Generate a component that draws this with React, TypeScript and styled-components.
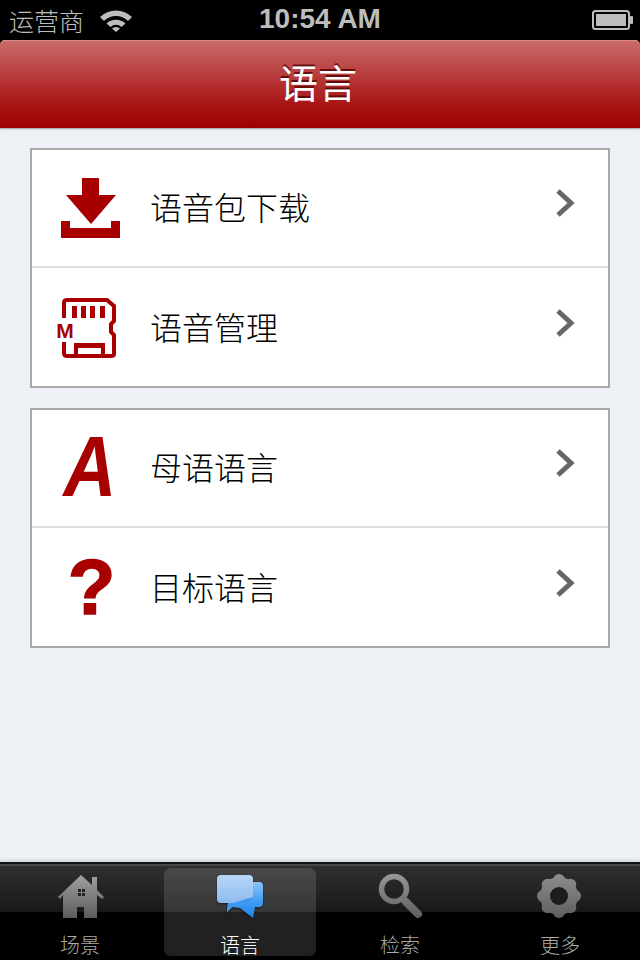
import React from "react";
import styled, { createGlobalStyle } from "styled-components";

const GlobalStyle = createGlobalStyle`
  html, body {
    margin: 0;
    padding: 0;
    background: #000;
  }
  #root {
    width: 640px;
    height: 960px;
    overflow: hidden;
  }
`;

const CJK = `"Noto Sans CJK SC", "Liberation Sans", sans-serif`;

const Screen = styled.div`
  width: 640px;
  height: 960px;
  display: flex;
  flex-direction: column;
  background: #000;
  font-family: ${CJK};
`;

const StatusBar = styled.div`
  height: 40px;
  flex: none;
  display: grid;
  grid-template-columns: 1fr auto 1fr;
  align-items: center;
  padding: 0 7px 0 9px;
  color: #bdbdbd;
`;

const StatusLeft = styled.div`
  display: flex;
  align-items: center;
  gap: 15px;
`;

const Carrier = styled.span`
  font-size: 25px;
  line-height: 40px;
  font-weight: 300;
`;

const Clock = styled.span`
  font-family: "Liberation Sans", Arial, sans-serif;
  font-size: 28px;
  font-weight: 700;
  line-height: 38px;
  margin: 0 2px 2px 0;
`;

const StatusRight = styled.div`
  display: flex;
  justify-content: flex-end;
`;

const NavBar = styled.header`
  height: 88px;
  flex: none;
  display: flex;
  align-items: center;
  justify-content: center;
  border-radius: 5px 5px 0 0;
  background: linear-gradient(#cb6a6a 0, #c66060 10%, #a91616 72%, #9f0000 100%);
  box-shadow: inset 0 1px 0 #d98a8a, 0 1px 2px rgba(0, 0, 0, 0.35);
  position: relative;
  z-index: 1;
`;

const NavTitle = styled.h1`
  margin: 0 4px 6px 0;
  color: #fff;
  font-size: 39px;
  font-weight: 400;
  line-height: 82px;
  text-shadow: 0 -2px 0 rgba(80, 0, 0, 0.8);
`;

const Content = styled.main`
  flex: 1;
  display: flex;
  flex-direction: column;
  gap: 20px;
  padding: 20px 30px 0;
  background: #edf0f5;
`;

const Group = styled.section`
  background: #fff;
  border: 2px solid #a9a9a9;
`;

const IconSlot = styled.div`
  width: 118px;
  flex: none;
  box-sizing: border-box;
  padding-left: 28px;
  display: flex;

  svg {
    display: block;
    flex: none;
    overflow: visible;
  }
`;

const RowLabel = styled.span`
  flex: 1;
  margin-top: -4px;
  font-size: 32px;
  font-weight: 300;
  line-height: 44px;
  color: #000;
`;

const Chevron = styled.svg`
  flex: none;
  margin: -10px 33px 0 0;
`;

const Row = styled.div`
  height: 116px;
  box-sizing: border-box;
  display: flex;
  align-items: center;

  & + & {
    height: 120px;
    border-top: 2px solid #dedede;

    ${RowLabel} {
      margin-top: -2px;
    }

    ${Chevron} {
      margin-top: -8px;
    }
  }
`;

const TabBar = styled.nav`
  height: 98px;
  flex: none;
  box-sizing: border-box;
  display: grid;
  grid-template-columns: repeat(4, 160px);
  padding: 4px 0;
  border-top: 2px solid #111;
  background: linear-gradient(#484848 0, #484848 2px, #2f2f2f 2px, #191919 48px, #000 48px);
  box-shadow: 0 -2px 3px rgba(0, 0, 0, 0.12);
  position: relative;
`;

const Tab = styled.div<{ $active?: boolean }>`
  margin: 0 4px;
  display: flex;
  flex-direction: column;
  align-items: center;
  border-radius: 7px;
  background: ${(p) => (p.$active ? "rgba(255, 255, 255, 0.13)" : "transparent")};
  color: ${(p) => (p.$active ? "#fff" : "#ababab")};

  svg {
    display: block;
    flex: none;
  }
`;

const TabLabel = styled.span`
  margin-top: 10px;
  font-size: 20px;
  font-weight: 300;
  line-height: 22px;
`;

const RED = "#a80000";

const WifiIcon = () => (
  <svg width="34" height="24" viewBox="0 0 34 24">
    <path d="M1 9 A23 23 0 0 1 33 9 L29 13 A17 17 0 0 0 5 13 Z" fill="#bdbdbd" />
    <path d="M7.5 15.5 A14 14 0 0 1 26.5 15.5 L22.5 19 A8 8 0 0 0 11.5 19 Z" fill="#bdbdbd" />
    <path d="M17 24 L13 20.5 A6 6 0 0 1 21 20.5 Z" fill="#bdbdbd" />
  </svg>
);

const BatteryIcon = () => (
  <svg width="41" height="20" viewBox="0 0 41 20">
    <rect x="1" y="1" width="36" height="18" rx="2.5" fill="none" stroke="#bdbdbd" strokeWidth="2" />
    <rect x="4" y="4" width="30" height="12" fill="#bdbdbd" />
    <rect x="38" y="6" width="3" height="8" rx="1" fill="#bdbdbd" />
  </svg>
);

const DownloadIcon = () => (
  <svg width="64" height="64" viewBox="0 0 64 64">
    <path d="M22 2 H39 V19 H56 L31 48 L6 19 H22 Z" fill={RED} />
    <path d="M1 45 H10 V52 H51 V45 H60 V62 H1 Z" fill={RED} />
  </svg>
);

const CardIcon = () => (
  <svg width="64" height="64" viewBox="0 0 64 64">
    <path
      d="M4 23 V8 Q4 5 7 5 H47 L54 11 V26 L51 29 V37 L54 40 V59 Q54 61 51 61 H7 Q4 61 4 58 V47"
      fill="none"
      stroke={RED}
      strokeWidth="4"
    />
    <rect x="12" y="11" width="5" height="12" fill={RED} />
    <rect x="21" y="11" width="5" height="12" fill={RED} />
    <rect x="30" y="11" width="5" height="12" fill={RED} />
    <rect x="40" y="11" width="5" height="12" fill={RED} />
    <path d="M14 60 V48 H45 V60 H41 V53 H18 V60 Z" fill={RED} />
    <text
      x="5"
      y="43"
      textAnchor="middle"
      fontFamily="Liberation Sans, sans-serif"
      fontWeight="700"
      fontSize="21"
      fill={RED}
    >
      M
    </text>
  </svg>
);

const LetterIcon = () => (
  <svg width="64" height="64" viewBox="0 0 64 64">
    <text
      transform="translate(30 60) scale(0.86 1)"
      textAnchor="middle"
      fontFamily="Liberation Sans, sans-serif"
      fontWeight="700"
      fontStyle="italic"
      fontSize="85"
      fill={RED}
    >
      A
    </text>
  </svg>
);

const QuestionIcon = () => (
  <svg width="64" height="64" viewBox="0 0 64 64">
    <text
      x="31.5"
      y="59"
      textAnchor="middle"
      fontFamily="Liberation Sans, sans-serif"
      fontWeight="700"
      fontSize="78"
      fill={RED}
      stroke={RED}
      strokeWidth="1.5"
    >
      ?
    </text>
  </svg>
);

const ChevronIcon = () => (
  <Chevron width="20" height="28" viewBox="0 0 20 28">
    <path d="M3 2 L16 14 L3 26" fill="none" stroke="#676767" strokeWidth="5" />
  </Chevron>
);

const HomeIcon = () => (
  <svg width="64" height="56" viewBox="0 0 64 56">
    <defs>
      <linearGradient id="homeFill" x1="0" y1="0" x2="0" y2="1">
        <stop offset="0" stopColor="#a0a0a0" />
        <stop offset="1" stopColor="#5c5c5c" />
      </linearGradient>
    </defs>
    <path
      d="M33 7 L44 17 V9 H49 V22 L56 29 L54 31 L49 27 V50 H36 V39 H29 V50 H15 V27 L12 31 L10 29 Z"
      fill="url(#homeFill)"
    />
    <rect x="30" y="21" width="3" height="3" fill="#222" />
    <rect x="34" y="21" width="3" height="3" fill="#222" />
    <rect x="30" y="25" width="3" height="3" fill="#222" />
    <rect x="34" y="25" width="3" height="3" fill="#222" />
  </svg>
);

const ChatIcon = () => (
  <svg width="64" height="56" viewBox="0 0 64 56">
    <defs>
      <linearGradient id="chatBack" x1="0" y1="0" x2="0" y2="1">
        <stop offset="0" stopColor="#8cc4f8" />
        <stop offset="0.55" stopColor="#3f9cf4" />
        <stop offset="1" stopColor="#1d83ea" />
      </linearGradient>
      <linearGradient id="chatFront" x1="0" y1="0" x2="0" y2="1">
        <stop offset="0" stopColor="#b9d7f8" />
        <stop offset="1" stopColor="#7fb2ec" />
      </linearGradient>
    </defs>
    <g style={{ filter: "drop-shadow(0 1px 1px rgba(0,0,0,0.5))" }}>
      <path
        d="M44 14 H51 Q55 14 55 18 V35 Q55 39 51 39 H47 L45 50 L32 40 L24 39 Z"
        fill="url(#chatBack)"
      />
      <path
        d="M13 7 H41 Q45 7 45 11 V31 Q45 35 41 35 H28 L19 44 L20 35 H13 Q9 35 9 31 V11 Q9 7 13 7 Z"
        fill="url(#chatFront)"
      />
      <path d="M25 35 L45 29 V31 Q45 35 41 35 H28 L19 44 L20 35 Z" fill="#3c97f2" />
    </g>
  </svg>
);

const SearchIcon = () => (
  <svg width="64" height="56" viewBox="0 0 64 56">
    <defs>
      <linearGradient id="searchFill" gradientUnits="userSpaceOnUse" x1="0" y1="4" x2="0" y2="50">
        <stop offset="0" stopColor="#9a9a9a" />
        <stop offset="1" stopColor="#5e5e5e" />
      </linearGradient>
    </defs>
    <circle cx="26" cy="21" r="12.5" fill="none" stroke="url(#searchFill)" strokeWidth="5.5" />
    <path d="M38 34 L50 46" stroke="url(#searchFill)" strokeWidth="8" strokeLinecap="round" />
  </svg>
);

const gearLobes = [0, 45, 90, 135, 180, 225, 270, 315];

const GearIcon = () => (
  <svg width="64" height="56" viewBox="0 0 64 56">
    <defs>
      <linearGradient id="gearFill" gradientUnits="userSpaceOnUse" x1="0" y1="6" x2="0" y2="50">
        <stop offset="0" stopColor="#8e8e8e" />
        <stop offset="1" stopColor="#5e5e5e" />
      </linearGradient>
    </defs>
    <circle cx="31" cy="28" r="19" fill="url(#gearFill)" />
    {gearLobes.map((deg) => (
      <circle
        key={deg}
        cx={31 + 16 * Math.cos((deg * Math.PI) / 180)}
        cy={28 + 16 * Math.sin((deg * Math.PI) / 180)}
        r="6"
        fill="url(#gearFill)"
      />
    ))}
    <circle cx="31" cy="28" r="9" fill="#1d1d1d" />
  </svg>
);

const groups = [
  [
    { label: "语音包下载", icon: <DownloadIcon /> },
    { label: "语音管理", icon: <CardIcon /> },
  ],
  [
    { label: "母语语言", icon: <LetterIcon /> },
    { label: "目标语言", icon: <QuestionIcon /> },
  ],
];

const tabs = [
  { label: "场景", icon: <HomeIcon /> },
  { label: "语言", icon: <ChatIcon />, active: true },
  { label: "检索", icon: <SearchIcon /> },
  { label: "更多", icon: <GearIcon /> },
];

export default function App() {
  return (
    <Screen>
      <GlobalStyle />
      <StatusBar>
        <StatusLeft>
          <Carrier>运营商</Carrier>
          <WifiIcon />
        </StatusLeft>
        <Clock>10:54 AM</Clock>
        <StatusRight>
          <BatteryIcon />
        </StatusRight>
      </StatusBar>
      <NavBar>
        <NavTitle>语言</NavTitle>
      </NavBar>
      <Content>
        {groups.map((rows, i) => (
          <Group key={i}>
            {rows.map((row) => (
              <Row key={row.label}>
                <IconSlot>{row.icon}</IconSlot>
                <RowLabel>{row.label}</RowLabel>
                <ChevronIcon />
              </Row>
            ))}
          </Group>
        ))}
      </Content>
      <TabBar>
        {tabs.map((tab) => (
          <Tab key={tab.label} $active={tab.active}>
            {tab.icon}
            <TabLabel>{tab.label}</TabLabel>
          </Tab>
        ))}
      </TabBar>
    </Screen>
  );
}
